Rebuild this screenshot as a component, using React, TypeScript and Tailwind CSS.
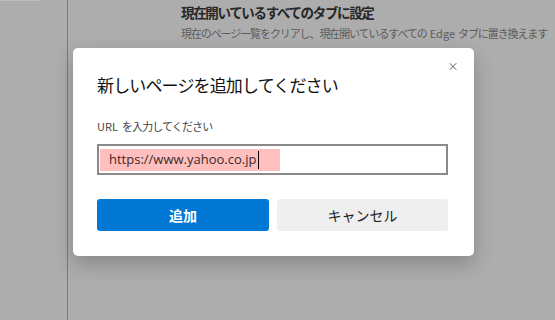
import { X } from "lucide-react";

const jp = { fontFamily: '"Noto Sans CJK JP", "Noto Sans", sans-serif' };

export default function App() {
  return (
    <div
      className="relative flex h-[320px] w-[555px] overflow-hidden bg-[#adadad]"
      style={jp}
    >
      {/* sidebar */}
      <div className="h-full w-[68px] shrink-0 border-r border-[#7a7a7a]">
        <div className="h-px w-[40px] bg-[#bdbdbd]" />
      </div>

      {/* settings content behind the dialog */}
      <div className="flex flex-col pl-[113px] pt-[2px] whitespace-nowrap">
        <div className="text-[13.5px] leading-[20px] font-bold tracking-[-0.1em] text-[#262626]">
          現在開いているすべてのタブに設定
        </div>
        <div className="mt-[1px] text-[11px] leading-[20px] tracking-[-0.1em] text-[#5c5c5c]">
          現在のページ一覧をクリアし、現在開いているすべての
          <span className="mx-[3px] tracking-normal">Edge</span>
          タブに置き換えます
        </div>
      </div>

      {/* modal */}
      <div className="absolute left-[73px] top-[48px] flex h-[208px] w-[401px] flex-col rounded-[5px] bg-white pl-[24px] pr-[26px] pt-[25px] shadow-[0_8px_20px_rgba(0,0,0,0.22)]">
        <button className="absolute right-[15px] top-[12px] flex h-[12px] w-[12px] items-center justify-center text-[#333]">
          <X size={13} strokeWidth={1.6} />
        </button>
        <h2 className="text-[17px] leading-[24px] tracking-[-0.05em] text-[#111]">
          新しいページを追加してください
        </h2>
        <label className="mt-[21px] text-[11px] leading-[16px] tracking-[-0.08em] text-[#444]">
          <span className="mr-[4px] tracking-normal">URL</span>を入力してください
        </label>
        <div className="mt-[10px] flex h-[31px] w-[351px] items-center border-2 border-[#8a8a8a] pl-[1px]">
          <div className="flex h-[22px] w-[180px] items-center bg-[#ffbfbf] pl-[9px]">
            <span
              className="text-[13px] text-[#3d2a2a]"
              style={{ fontFamily: '"Open Sans", "Noto Sans", sans-serif' }}
            >
              https://www.yahoo.co.jp
            </span>
            <span className="ml-[2px] h-[18px] w-px bg-black" />
          </div>
        </div>
        <div className="mt-[24px] flex gap-[8px]">
          <button className="h-[32px] w-[172px] rounded-[3px] bg-[#0078d4] text-[14px] font-bold text-white">
            追加
          </button>
          <button className="h-[32px] w-[171px] rounded-[3px] bg-[#efefef] text-[14px] text-[#1b1b1b]">
            キャンセル
          </button>
        </div>
      </div>
    </div>
  );
}
